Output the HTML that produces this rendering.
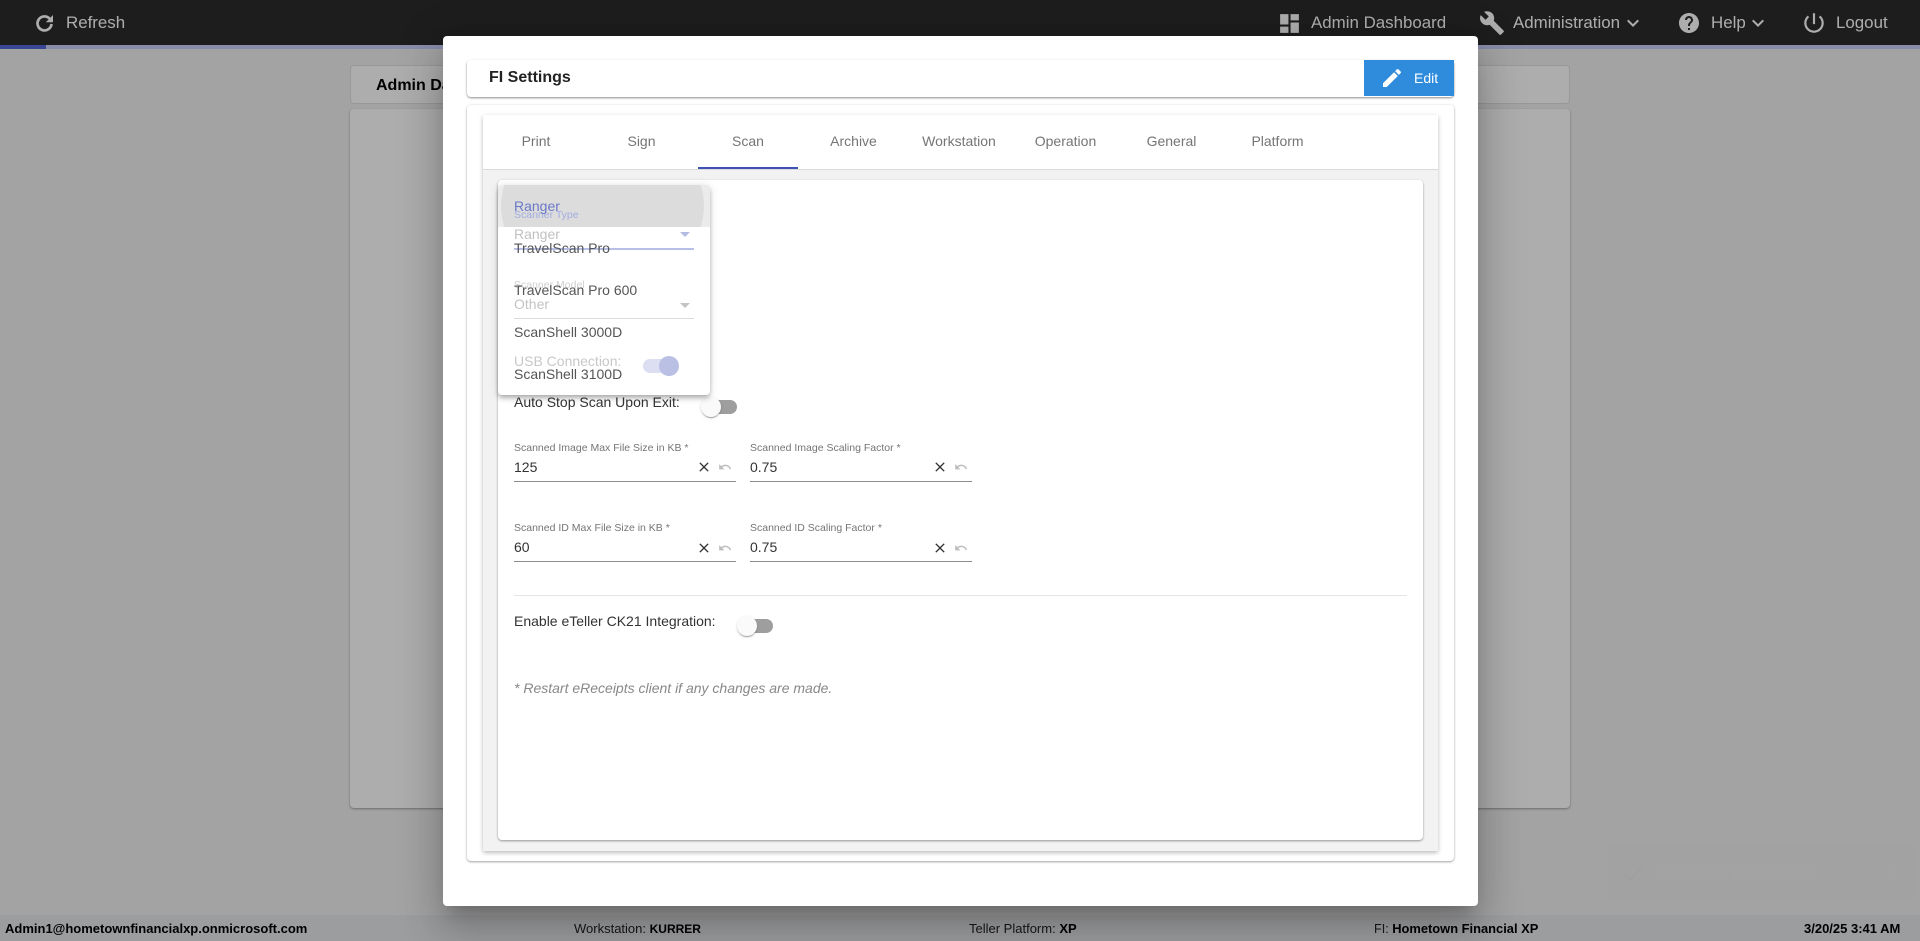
<!DOCTYPE html>
<html><head><meta charset="utf-8"><title>FI Settings</title>
<style>
html,body{margin:0;padding:0;width:1920px;height:941px;overflow:hidden;background:#f0f0f0;font-family:"Liberation Sans",sans-serif}
.a{position:absolute}
.t{position:absolute;white-space:nowrap;line-height:20px;height:20px}
svg{position:absolute;display:block}
.nav{color:#fff;font-size:16.9px}
.ft{font-size:13px;color:#222;top:919px}
.ft b{color:#000}
.tab{font-size:14px;color:#757575;top:131px;width:106px;text-align:center}
.item{font-size:14px;color:#555;left:514px}
.lbl{font-size:10.5px;color:#757575}
.val{font-size:14px;color:#333}
.line{position:absolute;height:1px;background:#8e8e8e}
.track{position:absolute;width:28px;height:14px;border-radius:7px;background:#9e9e9e}
.thumb{position:absolute;width:20px;height:20px;border-radius:50%;background:#fafafa;box-shadow:0 2px 1px -1px rgba(0,0,0,.2),0 1px 1px rgba(0,0,0,.14),0 1px 3px rgba(0,0,0,.12)}
</style></head><body>

<!-- page -->
<div class="a" style="left:0;top:45px;width:1920px;height:4px;background:#cbd0fa"></div>
<div class="a" style="left:0;top:0;width:1920px;height:45px;background:#2b2b2b"></div>
<div class="a" style="left:0;top:45px;width:46px;height:4px;background:#5567da"></div>

<svg style="left:33px;top:12px" width="24" height="24" viewBox="0 0 24 24" fill="none"><path d="M16.6 6.6A7 7 0 1 0 18.5 12" stroke="#fff" stroke-width="2.7"/><path d="M20 3v7.2h-7.2z" fill="#fff"/></svg>
<div class="t nav" style="left:66px;top:13px">Refresh</div>

<svg style="left:1277px;top:11px" width="25" height="25" viewBox="0 0 24 24" fill="#fff"><path d="M3 13h8V3H3v10zm0 8h8v-6H3v6zm10 0h8V11h-8v10zm0-18v6h8V3h-8z"/></svg>
<div class="t nav" style="left:1311px;top:13px">Admin Dashboard</div>
<svg style="left:1479px;top:10px" width="26" height="26" viewBox="0 0 24 24" fill="#fff"><path d="M22.7 19l-9.1-9.1c.9-2.3.4-5-1.5-6.9-2-2-5-2.4-7.4-1.3L9 6 6 9 1.6 4.7C.4 7.1.9 10.1 2.9 12.1c1.9 1.9 4.6 2.4 6.9 1.5l9.1 9.1c.4.4 1 .4 1.4 0l2.3-2.3c.5-.4.5-1.1.1-1.4z"/></svg>
<div class="t nav" style="left:1513px;top:13px">Administration</div>
<svg style="left:1621px;top:11px" width="24" height="24" viewBox="0 0 24 24" fill="#fff"><path d="M7.41 8.59L12 13.17l4.59-4.58L18 10l-6 6-6-6z"/></svg>
<svg style="left:1677px;top:11px" width="24" height="24" viewBox="0 0 24 24" fill="#fff"><path d="M12 2C6.48 2 2 6.48 2 12s4.48 10 10 10 10-4.48 10-10S17.52 2 12 2zm1 17h-2v-2h2v2zm2.07-7.75l-.9.92C13.45 12.9 13 13.5 13 15h-2v-.5c0-1.1.45-2.1 1.17-2.83l1.24-1.26c.37-.36.59-.86.59-1.41 0-1.1-.9-2-2-2s-2 .9-2 2H8c0-2.21 1.79-4 4-4s4 1.79 4 4c0 .88-.36 1.68-.93 2.25z"/></svg>
<div class="t nav" style="left:1711px;top:13px">Help</div>
<svg style="left:1746px;top:11px" width="24" height="24" viewBox="0 0 24 24" fill="#fff"><path d="M7.41 8.59L12 13.17l4.59-4.58L18 10l-6 6-6-6z"/></svg>
<svg style="left:1801px;top:10px" width="26" height="26" viewBox="0 0 24 24" fill="#fff"><path d="M13 3h-2v10h2V3zm4.83 2.17l-1.42 1.42C17.99 7.86 19 9.81 19 12c0 3.87-3.13 7-7 7s-7-3.13-7-7c0-2.19 1.01-4.14 2.58-5.42L6.17 5.17C4.23 6.82 3 9.26 3 12c0 4.97 4.03 9 9 9s9-4.03 9-9c0-2.74-1.23-5.18-3.17-6.83z"/></svg>
<div class="t nav" style="left:1836px;top:13px">Logout</div>

<div class="a" style="left:350px;top:65px;width:1218px;height:37px;background:#fff;border:1px solid #e0e0e0;border-radius:4px"></div>
<div class="t" style="left:376px;top:76px;font-size:16px;font-weight:bold;color:#000">Admin Dashboard</div>
<div class="a" style="left:350px;top:109px;width:1220px;height:699px;background:#fff;border-radius:4px;box-shadow:0 1px 2px rgba(0,0,0,.35)"></div>

<div class="a" style="left:0;top:915px;width:1920px;height:26px;background:#e6e7ea"></div>
<div class="t ft" style="left:5px"><b>Admin1@hometownfinancialxp.onmicrosoft.com</b></div>
<div class="t ft" style="left:574px">Workstation: <b style="font-size:12px">KURRER</b></div>
<div class="t ft" style="left:969px">Teller Platform: <b>XP</b></div>
<div class="t ft" style="left:1374px;font-size:12.6px">FI: <b style="font-size:12.9px">Hometown Financial XP</b></div>
<div class="t ft" style="left:1804px"><b>3/20/25 3:41 AM</b></div>

<!-- toast ghost -->
<div class="a" style="left:1608px;top:843px;width:306px;height:57px;background:#efefef"></div>
<svg style="left:1620px;top:861px" width="26" height="26" viewBox="0 0 24 24" fill="#ececec"><path d="M9 16.17L4.83 12l-1.42 1.41L9 19 21 7l-1.41-1.41z"/></svg>
<div class="t" style="left:1656px;top:863px;font-size:15.5px;font-weight:bold;color:#f1f1f1">Scanner Type Saved!</div>
<div class="t" style="left:1887px;top:863px;font-size:15px;font-weight:bold;color:#f1f1f1">x</div>

<!-- backdrop -->
<div class="a" style="left:0;top:0;width:1920px;height:941px;background:rgba(0,0,0,.32)"></div>

<!-- modal -->
<div class="a" style="left:443px;top:36px;width:1035px;height:870px;background:#fff;border-radius:4px;box-shadow:0 11px 15px -7px rgba(0,0,0,.2),0 24px 38px 3px rgba(0,0,0,.14),0 9px 46px 8px rgba(0,0,0,.12)"></div>

<div class="a" style="left:467px;top:60px;width:987px;height:37px;background:#fff;border-radius:4px;box-shadow:0 1px 2px rgba(0,0,0,.45)"></div>
<div class="t" style="left:489px;top:68px;font-size:16px;font-weight:bold;color:#222">FI Settings</div>
<div class="a" style="left:1364px;top:60px;width:90px;height:36px;background:#2f8cdc"></div>
<svg style="left:1380px;top:66px" width="24" height="24" viewBox="0 0 24 24" fill="#fff"><path d="M3 17.25V21h3.75L17.81 9.94l-3.75-3.75L3 17.25zM20.71 7.04c.39-.39.39-1.02 0-1.41l-2.34-2.34c-.39-.39-1.02-.39-1.41 0l-1.83 1.83 3.75 3.75 1.83-1.83z"/></svg>
<div class="t" style="left:1414px;top:68px;font-size:14px;color:#fff">Edit</div>

<div class="a" style="left:467px;top:105px;width:987px;height:756px;background:#fff;border-radius:4px;box-shadow:0 1px 2px rgba(0,0,0,.35),0 0 3px rgba(0,0,0,.06)"></div>
<div class="a" style="left:483px;top:115px;width:955px;height:736px;background:#f2f2f2;box-shadow:0 2px 4px rgba(0,0,0,.2),0 1px 6px rgba(0,0,0,.08)"></div>
<div class="a" style="left:483px;top:115px;width:955px;height:54px;background:#fff;border-bottom:1px solid #d9d9d9"></div>
<div class="t tab" style="left:483px">Print</div>
<div class="t tab" style="left:588.5px">Sign</div>
<div class="t tab" style="left:695px">Scan</div>
<div class="t tab" style="left:800.5px">Archive</div>
<div class="t tab" style="left:906px">Workstation</div>
<div class="t tab" style="left:1012.5px">Operation</div>
<div class="t tab" style="left:1118.5px">General</div>
<div class="t tab" style="left:1224.5px">Platform</div>
<div class="a" style="left:698px;top:167px;width:100px;height:2px;background:#3f51b5"></div>

<div class="a" style="left:498px;top:180px;width:925px;height:660px;background:#fff;border-radius:4px;box-shadow:0 1px 2px rgba(0,0,0,.4)"></div>

<!-- lower form -->
<div class="t val" style="left:514px;top:392px">Auto Stop Scan Upon Exit:</div>
<div class="track" style="left:709px;top:400px"></div>
<div class="thumb" style="left:701px;top:397px"></div>

<div class="t lbl" style="left:514px;top:438px">Scanned Image Max File Size in KB *</div>
<div class="t val" style="left:514px;top:457px">125</div>
<div class="line" style="left:514px;top:481px;width:222px"></div>
<div class="t lbl" style="left:750px;top:438px">Scanned Image Scaling Factor *</div>
<div class="t val" style="left:750px;top:457px">0.75</div>
<div class="line" style="left:750px;top:481px;width:222px"></div>

<div class="t lbl" style="left:514px;top:518px">Scanned ID Max File Size in KB *</div>
<div class="t val" style="left:514px;top:537px">60</div>
<div class="line" style="left:514px;top:561px;width:222px"></div>
<div class="t lbl" style="left:750px;top:518px">Scanned ID Scaling Factor *</div>
<div class="t val" style="left:750px;top:537px">0.75</div>
<div class="line" style="left:750px;top:561px;width:222px"></div>

<svg style="left:696px;top:459px" width="16" height="16" viewBox="0 0 24 24" fill="#333"><path d="M19 6.41L17.59 5 12 10.59 6.41 5 5 6.41 10.59 12 5 17.59 6.41 19 12 13.41 17.59 19 19 17.59 13.41 12z"/></svg>
<svg style="left:932px;top:459px" width="16" height="16" viewBox="0 0 24 24" fill="#333"><path d="M19 6.41L17.59 5 12 10.59 6.41 5 5 6.41 10.59 12 5 17.59 6.41 19 12 13.41 17.59 19 19 17.59 13.41 12z"/></svg>
<svg style="left:696px;top:540px" width="16" height="16" viewBox="0 0 24 24" fill="#333"><path d="M19 6.41L17.59 5 12 10.59 6.41 5 5 6.41 10.59 12 5 17.59 6.41 19 12 13.41 17.59 19 19 17.59 13.41 12z"/></svg>
<svg style="left:932px;top:540px" width="16" height="16" viewBox="0 0 24 24" fill="#333"><path d="M19 6.41L17.59 5 12 10.59 6.41 5 5 6.41 10.59 12 5 17.59 6.41 19 12 13.41 17.59 19 19 17.59 13.41 12z"/></svg>
<svg style="left:718px;top:460px" width="14" height="14" viewBox="0 0 24 24" fill="#bdbdbd"><path d="M12.5 8c-2.65 0-5.05.99-6.9 2.6L2 7v9h9l-3.62-3.62c1.39-1.16 3.16-1.88 5.12-1.88 3.54 0 6.55 2.31 7.6 5.5l2.37-.78C21.08 11.03 17.15 8 12.5 8z"/></svg>
<svg style="left:954px;top:460px" width="14" height="14" viewBox="0 0 24 24" fill="#bdbdbd"><path d="M12.5 8c-2.65 0-5.05.99-6.9 2.6L2 7v9h9l-3.62-3.62c1.39-1.16 3.16-1.88 5.12-1.88 3.54 0 6.55 2.31 7.6 5.5l2.37-.78C21.08 11.03 17.15 8 12.5 8z"/></svg>
<svg style="left:718px;top:541px" width="14" height="14" viewBox="0 0 24 24" fill="#bdbdbd"><path d="M12.5 8c-2.65 0-5.05.99-6.9 2.6L2 7v9h9l-3.62-3.62c1.39-1.16 3.16-1.88 5.12-1.88 3.54 0 6.55 2.31 7.6 5.5l2.37-.78C21.08 11.03 17.15 8 12.5 8z"/></svg>
<svg style="left:954px;top:541px" width="14" height="14" viewBox="0 0 24 24" fill="#bdbdbd"><path d="M12.5 8c-2.65 0-5.05.99-6.9 2.6L2 7v9h9l-3.62-3.62c1.39-1.16 3.16-1.88 5.12-1.88 3.54 0 6.55 2.31 7.6 5.5l2.37-.78C21.08 11.03 17.15 8 12.5 8z"/></svg>

<div class="a" style="left:514px;top:595px;width:893px;height:1px;background:#e5e5e5"></div>
<div class="t val" style="left:514px;top:611px">Enable eTeller CK21 Integration:</div>
<div class="track" style="left:745px;top:619px"></div>
<div class="thumb" style="left:737px;top:616px"></div>
<div class="t" style="left:514px;top:678px;font-size:14px;font-style:italic;color:#888">* Restart eReceipts client if any changes are made.</div>

<!-- dropdown panel -->
<div class="a" style="left:498px;top:185px;width:212px;height:210px;background:#fff;border-radius:4px;box-shadow:0 2px 4px -1px rgba(0,0,0,.2),0 4px 5px rgba(0,0,0,.14),0 1px 10px rgba(0,0,0,.12);overflow:hidden">
  <div class="a" style="left:0;top:0;width:212px;height:42px;background:#ebebeb"></div>
  <div class="a" style="left:3px;top:-60px;width:203px;height:162px;border-radius:50%;clip-path:inset(60px 0 60px 0);background:#dcdcdc"></div>
</div>

<!-- faded form under the panel -->
<div class="t lbl" style="left:514px;top:205px;color:#a3ade0">Scanner Type</div>
<div class="t" style="left:514px;top:224px;font-size:14px;color:#c0c0c0">Ranger</div>
<div class="a" style="left:680px;top:232px;width:0;height:0;border-left:5px solid transparent;border-right:5px solid transparent;border-top:5px solid #b4bce4"></div>
<div class="a" style="left:514px;top:248px;width:180px;height:2px;background:#b7bfe6"></div>
<div class="t lbl" style="left:514px;top:275px;color:#d0d0d0">Scanner Model</div>
<div class="t" style="left:514px;top:294px;font-size:14px;color:#c4c4c4">Other</div>
<div class="a" style="left:680px;top:303px;width:0;height:0;border-left:5px solid transparent;border-right:5px solid transparent;border-top:5px solid #c4c4c4"></div>
<div class="a" style="left:514px;top:318px;width:180px;height:1px;background:#dcdcdc"></div>
<div class="t" style="left:514px;top:351px;font-size:14px;color:#c8c8c8">USB Connection:</div>
<div class="a" style="left:643px;top:359px;width:32px;height:14px;border-radius:7px;background:#dcdff1"></div>
<div class="a" style="left:659px;top:356px;width:20px;height:20px;border-radius:50%;background:#b9c0e4"></div>

<div class="t item" style="top:196px;color:#6a78c8">Ranger</div>
<div class="t item" style="top:238px">TravelScan Pro</div>
<div class="t item" style="top:280px">TravelScan Pro 600</div>
<div class="t item" style="top:322px">ScanShell 3000D</div>
<div class="t item" style="top:364px">ScanShell 3100D</div>

</body></html>
